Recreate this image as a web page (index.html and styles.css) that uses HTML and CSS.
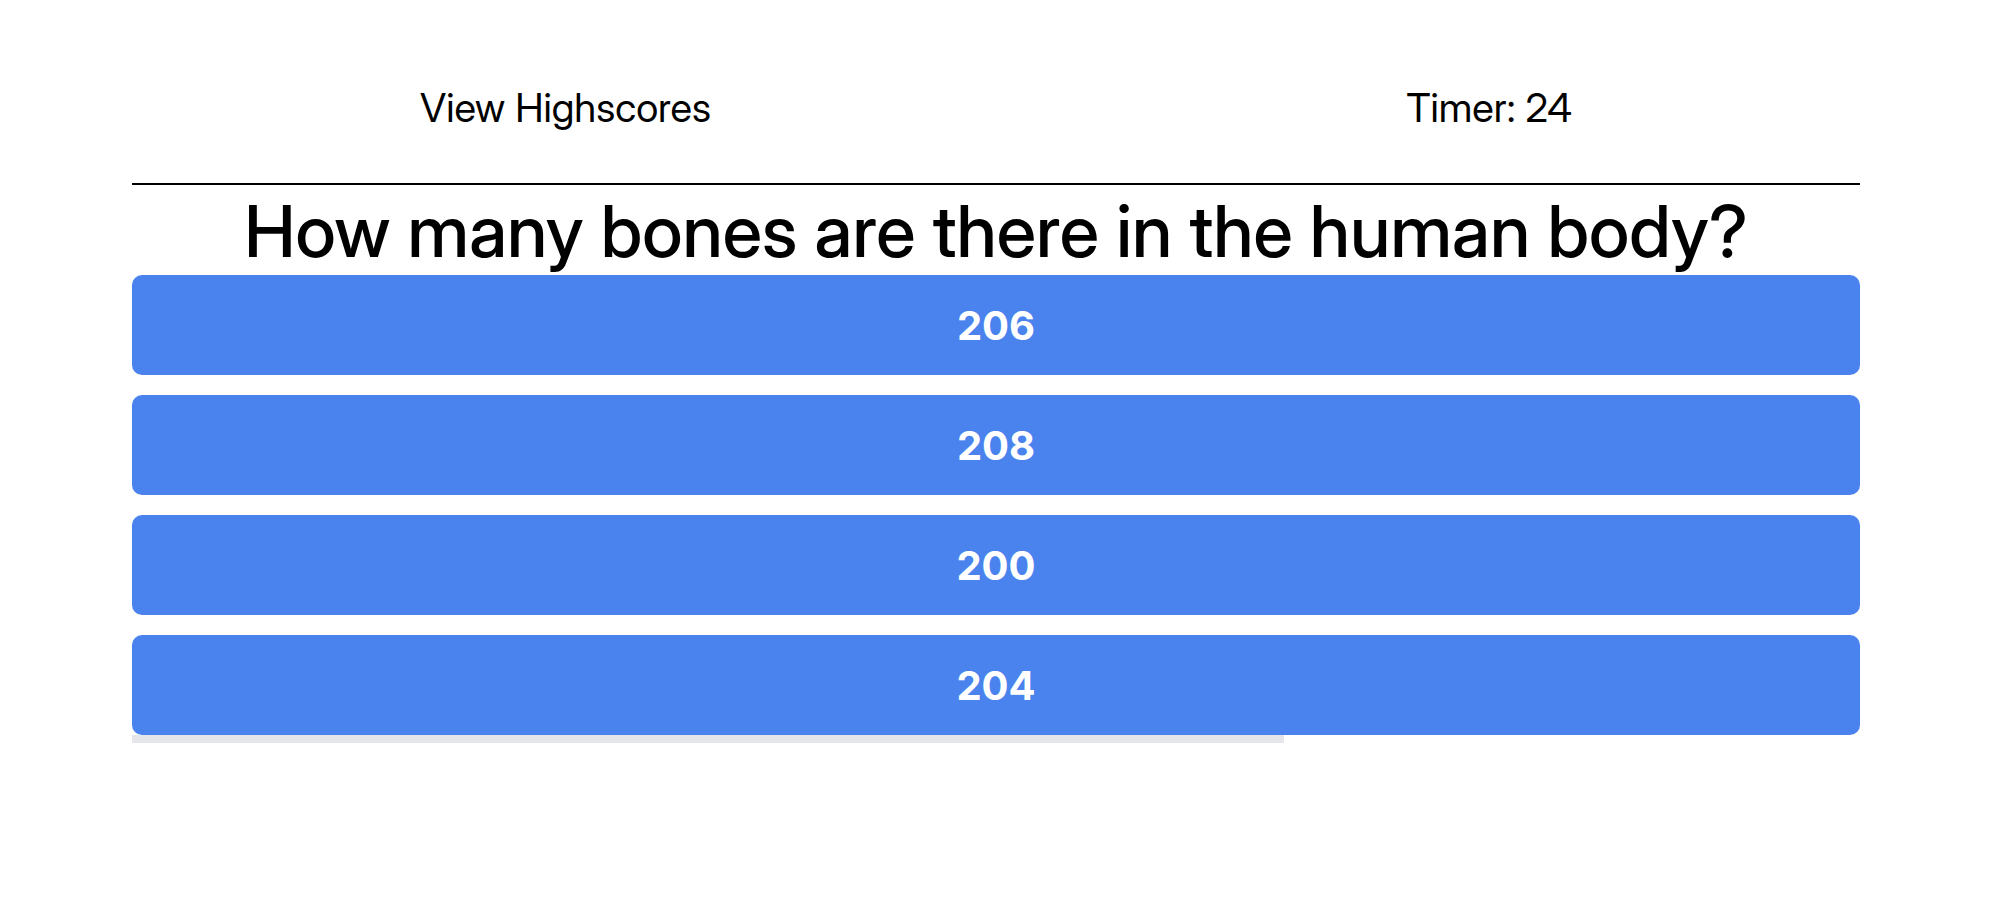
FILE: index.html
```html
<!DOCTYPE html>
<html lang="en">
<head>
<meta charset="utf-8">
<title>Quiz</title>
<link rel="stylesheet" href="styles.css">
</head>
<body>
<div class="page">
<header class="topbar">
<a class="topbar-item" href="#highscores">View Highscores</a>
<p class="topbar-item">Timer: 24</p>
</header>
<main>
<h1 class="question">How many bones are there in the human body?</h1>
<div class="answers">
<button class="answer" type="button">206</button>
<button class="answer" type="button">208</button>
<button class="answer" type="button">200</button>
<button class="answer" type="button">204</button>
</div>
<div class="feedback"></div>
</main>
</div>
</body>
</html>
```
FILE: styles.css
```css
* {
  box-sizing: border-box;
}

body {
  margin: 0;
  background: #fff;
  color: #000;
  font-family: "Inter Display", Inter, "Liberation Sans", sans-serif;
}

.page {
  padding: 60px 154px 0 132px;
}

.topbar {
  display: flex;
  justify-content: space-between;
  padding: 24px 16.6667% 51px;
  border-bottom: 2px solid #000;
}

.topbar-item {
  margin: 0;
  color: inherit;
  font-size: 40px;
  font-weight: 400;
  line-height: 48px;
  text-decoration: none;
}

.question {
  margin: 0;
  padding-top: 2px;
  font-size: 72px;
  font-weight: 500;
  line-height: 88px;
  text-align: center;
}

.answers {
  display: grid;
  gap: 20px;
}

.answer {
  height: 100px;
  border: 0;
  border-radius: 10px;
  background: #4a83ee;
  color: #fff;
  font-family: Inter, "Liberation Sans", sans-serif;
  font-size: 40px;
  font-weight: 700;
}

.feedback {
  width: 66.6667%;
  height: 8px;
  background: #e4e6ea;
}
```
